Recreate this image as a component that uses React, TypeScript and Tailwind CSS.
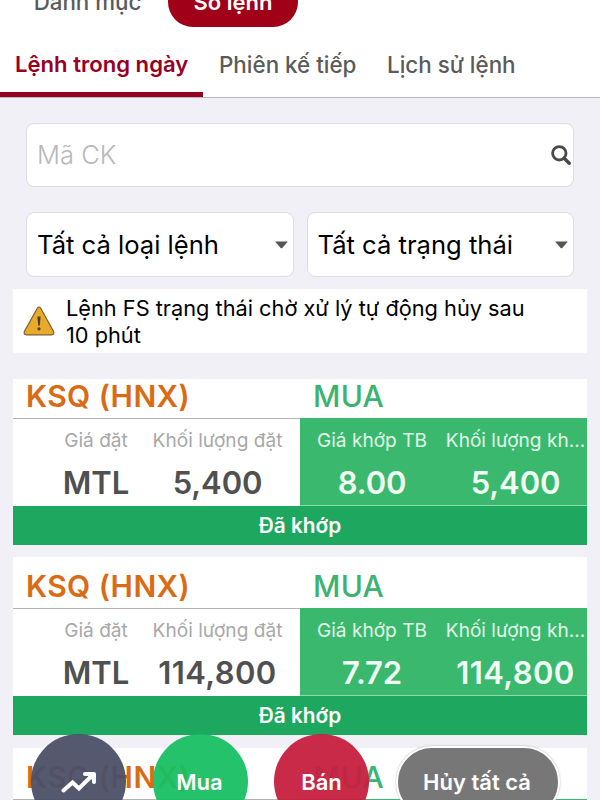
import { useState } from 'react'

interface Order {
  id: number
  symbol: string
  side: string
  price: string
  volume: string
  matchedPrice: string
  matchedVolume: string
  status: string
}

const ORDERS: Order[] = [
  {
    id: 1,
    symbol: 'KSQ (HNX)',
    side: 'MUA',
    price: 'MTL',
    volume: '5,400',
    matchedPrice: '8.00',
    matchedVolume: '5,400',
    status: 'Đã khớp',
  },
  {
    id: 2,
    symbol: 'KSQ (HNX)',
    side: 'MUA',
    price: 'MTL',
    volume: '114,800',
    matchedPrice: '7.72',
    matchedVolume: '114,800',
    status: 'Đã khớp',
  },
  {
    id: 3,
    symbol: 'KSQ (HNX)',
    side: 'MUA',
    price: 'MTL',
    volume: '5,400',
    matchedPrice: '8.00',
    matchedVolume: '5,400',
    status: 'Đã khớp',
  },
]

const TABS = [
  { label: 'Lệnh trong ngày', width: 'w-[203px] pl-[15px]' },
  { label: 'Phiên kế tiếp', width: 'w-[168px] pl-4' },
  { label: 'Lịch sử lệnh', width: 'w-[160px] pl-4' },
]

export default function App() {
  const [activeTab, setActiveTab] = useState(0)

  return (
    <div className="relative flex h-[800px] w-[600px] flex-col overflow-hidden whitespace-nowrap bg-[#f1f0f7] font-[Inter,'Noto_Sans',sans-serif] text-black">
      <header className="h-[98px] shrink-0 border-b border-[#b9b8bf] bg-white">
        <div className="flex h-[27px] items-end">
          <div className="flex h-[50px] w-[168px] items-center justify-center pl-[7px] text-[22.3px] font-medium text-[#5b5b5b]">
            Danh mục
          </div>
          <div className="flex h-[50px] w-[130px] items-center justify-center rounded-full bg-[#a00018] text-[22px] font-semibold text-white">
            Sổ lệnh
          </div>
        </div>
        <nav className="flex h-[70px]">
          {TABS.map((tab, i) => (
            <button
              key={tab.label}
              onClick={() => setActiveTab(i)}
              className={`flex items-center border-b-[5px] pt-2.5 text-left ${tab.width} ${
                activeTab === i
                  ? 'border-[#98001f] text-[22.1px] font-semibold text-[#98001f]'
                  : 'border-transparent text-[22.4px] font-medium text-[#5b5b5b]'
              }`}
            >
              {tab.label}
            </button>
          ))}
        </nav>
      </header>

      <section className="flex flex-col gap-[25px] px-[26px] pt-[25px]">
        <div className="flex h-16 items-center justify-between rounded-lg border border-[#dcdce1] bg-white pl-[10px] pr-[2px] text-[25.5px] font-light text-[#b8b8b8]">
          <span>Mã CK</span>
          <SearchIcon />
        </div>
        <div className="flex gap-[13px]">
          <SelectBox label="Tất cả loại lệnh" />
          <SelectBox label="Tất cả trạng thái" />
        </div>
      </section>

      <div className="mx-[13px] mt-3 flex h-16 shrink-0 items-center bg-white pl-[10px]">
        <WarningIcon />
        <p className="ml-[11px] pt-0.5 text-[21.75px] leading-[27px]">
          Lệnh FS trạng thái chờ xử lý tự động hủy sau
          <br />
          10 phút
        </p>
      </div>

      <div className="mx-[13px] mt-[26px] flex flex-col gap-[12.4px]">
        {ORDERS.map((order, i) => (
          <OrderCard key={order.id} order={order} first={i === 0} />
        ))}
      </div>

      {/* Floating actions */}
      <div className="absolute left-[31px] top-[734px] flex items-center text-[22px] font-semibold text-white">
        <button className="flex size-[95px] items-center justify-center rounded-full bg-[#4b5067]/95">
          <TrendIcon />
        </button>
        <button className="ml-[27px] flex size-[95px] items-center justify-center rounded-full bg-[#18bf63]/95 pr-0.5 pt-0.5">
          Mua
        </button>
        <button className="ml-[26px] flex size-[95px] items-center justify-center rounded-full bg-[#c61f3e]/95 pt-0.5">
          Bán
        </button>
        <button className="ml-[27px] flex h-[72px] w-[164px] items-center justify-center rounded-full border-2 border-white bg-[#777] pr-0.5 pt-0.5 shadow-[0_0_2px_#aaa]">
          Hủy tất cả
        </button>
      </div>
    </div>
  )
}

function SelectBox({ label }: { label: string }) {
  return (
    <div className="flex h-[65px] flex-1 items-center justify-between rounded-lg border border-[#dcdce1] bg-white pl-[10px] pr-[5px] text-[25.6px]">
      <span className="pt-0.5">{label}</span>
      <svg width="13" height="8" viewBox="0 0 13 8">
        <path d="M1 .5h11q1 0 .3.8L7.3 7q-.8.7-1.6 0L.7 1.3Q0 .5 1 .5z" fill="#555" />
      </svg>
    </div>
  )
}

function OrderCard({ order, first }: { order: Order; first: boolean }) {
  return (
    <article className="shrink-0">
      <div
        className={`flex items-end bg-white text-[30px] font-semibold leading-[44px] ${
          first ? 'h-[39px]' : 'h-[51px]'
        }`}
      >
        <div className="w-[287px] pl-[13px] tracking-[0.4px] text-[#d96b14]">{order.symbol}</div>
        <div className="pl-[13px] font-medium tracking-[0.3px] text-[#3cb371]">{order.side}</div>
      </div>
      <div className="flex h-[88px]">
        <div className="flex w-[287px] border-t border-[#b5b5b5] bg-white pl-[44px]">
          <Cell label="Giá đặt" value={order.price} width="w-[78px]" />
          <Cell label="Khối lượng đặt" value={order.volume} width="w-[165px]" />
        </div>
        <div className="flex w-[287px] border-b border-[#8ed8ab] bg-[#3ab96e] text-white">
          <Cell label="Giá khớp TB" value={order.matchedPrice} width="w-[144px]" light />
          <Cell label="Khối lượng kh..." value={order.matchedVolume} width="w-[143px]" light />
        </div>
      </div>
      <div className="flex h-[39px] items-center justify-center bg-[#1da75f] text-[20.8px] font-semibold text-white">
        {order.status}
      </div>
    </article>
  )
}

interface CellProps {
  label: string
  value: string
  width: string
  light?: boolean
}

function Cell({ label, value, width, light }: CellProps) {
  return (
    <div className={`flex flex-col items-center ${light ? 'pt-[10px]' : 'pt-[9px]'} ${width}`}>
      <div className={`text-[19.1px] leading-6 ${light ? 'text-[#e0f8e8]' : 'text-[#a8a8a8]'}`}>
        {label}
      </div>
      <div
        className={`text-[31px] leading-10 ${
          light ? 'mt-[11px] font-semibold text-[#effff4]' : 'mt-[11px] font-[560] text-[#505050]'
        } ${value.length > 5 ? 'tracking-[0.4px]' : 'tracking-[-0.1px]'}`}
      >
        {value}
      </div>
    </div>
  )
}

function SearchIcon() {
  return (
    <svg width="20" height="20" viewBox="0 0 20 20" fill="none" stroke="#4a4a4a">
      <circle cx="8.3" cy="8.3" r="6.7" strokeWidth="2.8" />
      <path d="M13.2 13.2l5 5" strokeWidth="3.5" strokeLinecap="round" />
    </svg>
  )
}

function WarningIcon() {
  return (
    <svg width="32" height="30" viewBox="0 0 32 30">
      <path
        d="M14.4 2Q16 0 17.6 2L30.6 25.4Q31.6 28.6 28.6 28.8H3.4Q.4 28.6 1.4 25.4Z"
        fill="#e9aa2b"
        stroke="#75602f"
        strokeWidth="1.2"
      />
      <path d="M14.4 10.5h3.2l-.8 9h-1.6z" fill="#4c3d1b" />
      <circle cx="16" cy="22.8" r="1.6" fill="#4c3d1b" />
    </svg>
  )
}

function TrendIcon() {
  return (
    <svg width="36" height="24" viewBox="0 0 36 24" fill="none" stroke="#fff" strokeWidth="4">
      <path d="M2.5 20.5L11.5 12.5l6.5 6L31 5.5" strokeLinejoin="miter" strokeLinecap="round" />
      <path d="M24 4H33V12" strokeLinejoin="round" strokeLinecap="round" />
      <path d="M25 4H33V12z" fill="#fff" stroke="none" />
    </svg>
  )
}
